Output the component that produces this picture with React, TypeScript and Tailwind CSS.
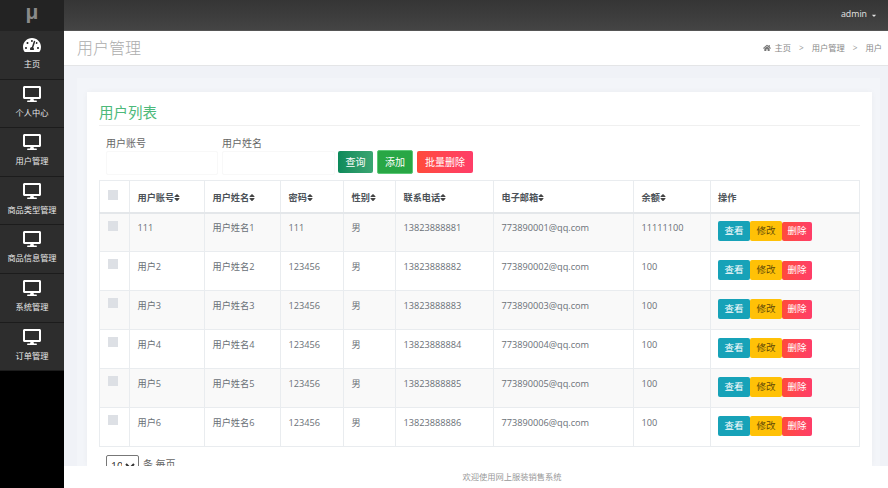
import { FaCaretDown, FaDesktop, FaHome, FaSort, FaTachometerAlt } from 'react-icons/fa';

const font = "font-['Open_Sans','Noto_Sans_CJK_SC',sans-serif]";

const menu = ['个人中心', '用户管理', '商品类型管理', '商品信息管理', '系统管理', '订单管理'];

const columns = [
  { label: '用户账号', width: 'w-[75px]' },
  { label: '用户姓名', width: 'w-[76px]' },
  { label: '密码', width: 'w-[63px]' },
  { label: '性别', width: 'w-[52px]' },
  { label: '联系电话', width: 'w-[98px]' },
  { label: '电子邮箱', width: 'w-[140px]' },
  { label: '余额', width: 'w-[77px]' },
];

const users = [
  { account: '111', name: '用户姓名1', password: '111', phone: '13823888881', email: '773890001@qq.com', balance: '11111100' },
  { account: '用户2', name: '用户姓名2', password: '123456', phone: '13823888882', email: '773890002@qq.com', balance: '100' },
  { account: '用户3', name: '用户姓名3', password: '123456', phone: '13823888883', email: '773890003@qq.com', balance: '100' },
  { account: '用户4', name: '用户姓名4', password: '123456', phone: '13823888884', email: '773890004@qq.com', balance: '100' },
  { account: '用户5', name: '用户姓名5', password: '123456', phone: '13823888885', email: '773890005@qq.com', balance: '100' },
  { account: '用户6', name: '用户姓名6', password: '123456', phone: '13823888886', email: '773890006@qq.com', balance: '100' },
];

function SideItem({ label, dashboard }: { label: string; dashboard?: boolean }) {
  return (
    <div className="flex h-[48.6px] flex-col items-center border-b border-[#1c1c1c] bg-[#2d2d2d] pt-[5px] text-white">
      {dashboard ? <FaTachometerAlt className="h-[18px] w-[18px]" /> : <FaDesktop className="h-[18px] w-[18px]" />}
      <span className="mt-[4px] text-[8.2px] leading-[12px] whitespace-nowrap text-[#e8e8e8]">{label}</span>
    </div>
  );
}

function Sidebar() {
  return (
    <aside className="flex w-[64px] shrink-0 flex-col bg-black">
      <div className="flex h-[31px] items-start justify-center bg-[#232323] font-['Liberation_Sans',sans-serif] text-[21px] leading-[24px] font-bold text-[#8a8a8a]">μ</div>
      <SideItem label="主页" dashboard />
      {menu.map((item) => (
        <SideItem key={item} label={item} />
      ))}
    </aside>
  );
}

function Breadcrumb() {
  return (
    <div className="flex items-center text-[8.25px] text-[#888]">
      <FaHome className="mr-[4px] h-[8px] w-[8px] text-[#777]" />
      <span>主页</span>
      <span className="mx-[8px] text-[#999]">&gt;</span>
      <span>用户管理</span>
      <span className="mx-[8px] text-[#999]">&gt;</span>
      <span>用户</span>
    </div>
  );
}

function SearchField({ label, width }: { label: string; width: string }) {
  return (
    <label className="flex flex-col text-[10px] text-[#666]">
      <span className="mb-[2px] leading-[12px]">{label}</span>
      <input className={`h-[24px] rounded-[2px] border border-[#f8f8f8] bg-white outline-none ${width}`} />
    </label>
  );
}

function ActionButton({ label, className }: { label: string; className: string }) {
  return (
    <button className={`rounded-[2px] text-[9.5px] ${className}`}>{label}</button>
  );
}

function UserTable() {
  return (
    <table className="mt-[5px] w-[761px] table-fixed border-collapse text-[9.2px] text-[#6a7077]">
      <thead>
        <tr className="h-[32px] border-b-2 border-[#e4e7ea] text-left text-[#4c5258]">
          <th className="w-[30px] border border-[#e9ecef] pl-[8px] align-middle">
            <span className="mb-[2px] block h-[10px] w-[10px] bg-[#dde0e5]" />
          </th>
          {columns.map((col) => (
            <th key={col.label} className={`border border-[#e9ecef] pt-[3px] pl-[7.5px] font-semibold whitespace-nowrap ${col.width}`}>
              <span className="inline-flex items-center">
                {col.label}
                <FaSort className="h-[9px] w-[6px] text-[#444]" />
              </span>
            </th>
          ))}
          <th className="border border-[#e9ecef] pt-[3px] pl-[7px] font-semibold">操作</th>
        </tr>
      </thead>
      <tbody>
        {users.map((user) => (
          <tr key={user.phone} className="h-[39px] odd:bg-[#f9f9f9]">
            <td className="border border-[#e9ecef] pt-[7px] pl-[8px] align-top">
              <span className="block h-[10px] w-[10px] bg-[#dde0e5]" />
            </td>
            <td className="border border-[#e9ecef] pt-[7.5px] pl-[7.5px] align-top">{user.account}</td>
            <td className="border border-[#e9ecef] pt-[7.5px] pl-[7.5px] align-top">{user.name}</td>
            <td className="border border-[#e9ecef] pt-[7.5px] pl-[7.5px] align-top">{user.password}</td>
            <td className="border border-[#e9ecef] pt-[7.5px] pl-[7.5px] align-top">男</td>
            <td className="border border-[#e9ecef] pt-[7.5px] pl-[7.5px] align-top">{user.phone}</td>
            <td className="border border-[#e9ecef] pt-[7.5px] pl-[7.5px] align-top">{user.email}</td>
            <td className="border border-[#e9ecef] pt-[7.5px] pl-[7.5px] align-top">{user.balance}</td>
            <td className="border border-[#e9ecef] pb-[2px] pl-[7px]">
              <div className="flex items-center">
                <ActionButton label="查看" className="h-[20px] w-[32px] bg-[#17a2b8] text-white" />
                <ActionButton label="修改" className="h-[20px] w-[32px] bg-[#ffc107] text-[#5f4a08]" />
                <ActionButton label="删除" className="h-[19px] w-[30px] bg-gradient-to-r from-[#ff4b3a] to-[#ff3d68] text-white" />
              </div>
            </td>
          </tr>
        ))}
      </tbody>
    </table>
  );
}

export default function App() {
  return (
    <div className={`flex h-[488px] w-[888px] overflow-hidden ${font}`}>
      <Sidebar />
      <div className="flex min-w-0 flex-1 flex-col bg-white">
        <header className="flex h-[31px] shrink-0 items-center justify-end border-b border-[#555] bg-gradient-to-b from-[#353535] to-[#444] pr-[11px] text-[8.8px] text-[#e4e4e4]">
          admin
          <FaCaretDown className="ml-[4px] h-[7px] w-[6px]" />
        </header>
        <div className="flex h-[35px] shrink-0 items-center justify-between border-b border-[#e4e5e7] bg-white pr-[6px] pl-[13px]">
          <h1 className="text-[16px] font-light text-[#adadad]">用户管理</h1>
          <Breadcrumb />
        </div>
        <main className="h-[400px] shrink-0 overflow-hidden bg-[#f0f2f7] px-[13px] pt-[12px] pr-[8px]">
          <div className="h-full bg-[#f3f5f9] pt-[14px] pl-[10px]">
            <section className="h-full w-[785px] bg-white px-[12px] pt-[11px] shadow-[0_0_6px_rgba(0,0,0,0.04)]">
              <h2 className="border-b border-[#f0f0f0] pb-[2px] text-[14.5px] leading-[20px] font-normal text-[#4cb97a]">用户列表</h2>
              <div className="mt-[11px] flex items-end pl-[7px]">
                <SearchField label="用户账号" width="w-[112px]" />
                <div className="ml-[4px]">
                  <SearchField label="用户姓名" width="w-[113px]" />
                </div>
                <button className="mb-[2px] ml-[3px] h-[22px] w-[35px] rounded-[2px] bg-gradient-to-r from-[#0b8a5b] to-[#3aa672] text-[10px] text-white">查询</button>
                <button className="mb-[1px] ml-[4px] h-[24px] w-[36px] rounded-[2px] border border-[#5cc977] bg-[#28a745] text-[10px] text-white">添加</button>
                <button className="mb-[2px] ml-[4px] h-[22px] w-[56px] rounded-[2px] bg-gradient-to-r from-[#ff4b3a] to-[#ff3d68] text-[10px] text-white">批量删除</button>
              </div>
              <UserTable />
              <div className="mt-[8px] flex items-start pl-[7px] text-[10px] text-[#666]">
                <select className="mr-[4px] h-[22px] w-[33px] rounded-[2px] border border-[#777] bg-white text-[10.5px] text-[#333]">
                  <option>10</option>
                </select>
                <span className="pt-[2px]">条 每页</span>
              </div>
            </section>
          </div>
        </main>
        <footer className="flex h-[22px] flex-1 items-center justify-center pl-[72px] text-[8.25px] text-[#999]">欢迎使用网上服装销售系统</footer>
      </div>
    </div>
  );
}
